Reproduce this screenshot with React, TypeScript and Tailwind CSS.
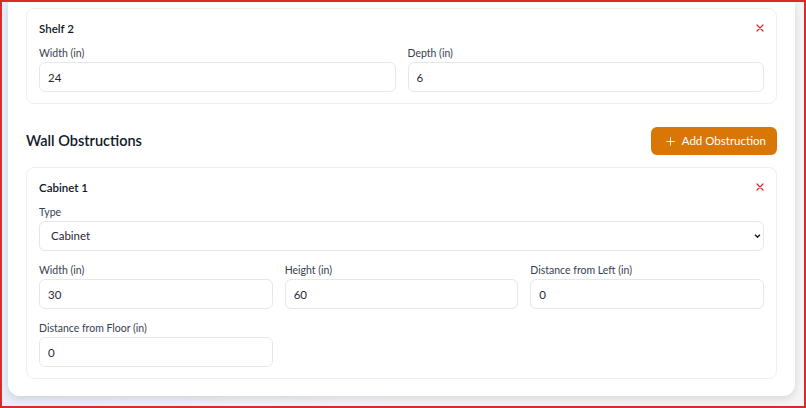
import { Plus } from "lucide-react";

const font = { fontFamily: 'Lato, "Noto Sans", sans-serif' };

function Field({ label, value }: { label: string; value: string }) {
  return (
    <label className="flex flex-col">
      <span className="mb-[1px] text-[10.5px] leading-4 text-[#374151]">{label}</span>
      <input
        readOnly
        value={value}
        className="h-[30px] w-full rounded-md border border-[#e5e7eb] bg-white px-2 text-[11.5px] text-[#1f2937] outline-none"
      />
    </label>
  );
}

function CloseIcon() {
  return (
    <svg viewBox="0 0 8 8" className="h-2 w-2" fill="none" stroke="#dc2626" strokeWidth="1.2" strokeLinecap="round">
      <path d="M1 1l6 6M7 1L1 7" />
    </svg>
  );
}

function ItemCard({ title, children }: { title: string; children: React.ReactNode }) {
  return (
    <section className="rounded-lg border border-[#eeeff1] bg-white px-3 pt-[10px] pb-[11px]">
      <div className="mb-[6px] flex h-5 items-center justify-between">
        <h3 className="text-[11.5px] font-semibold text-[#111827]">{title}</h3>
        <button className="-mt-[2px] -mr-[1px] flex h-4 w-[10px] items-center justify-center">
          <CloseIcon />
        </button>
      </div>
      {children}
    </section>
  );
}

export default function App() {
  return (
    <div
      style={font}
      className="flex h-[408px] w-full flex-col overflow-hidden border-2 border-[#d62c2c] bg-gradient-to-r from-[#e9eff8] via-[#f4f5f7] to-[#f5f5f5] pr-[9px] pl-[6px]"
    >
      <div className="rounded-b-xl bg-white px-[18px] pt-[6px] pb-[17px] shadow-[0_3px_8px_rgba(0,0,0,0.12)]">
        <ItemCard title="Shelf 2">
          <div className="grid grid-cols-2 gap-3">
            <Field label="Width (in)" value="24" />
            <Field label="Depth (in)" value="6" />
          </div>
        </ItemCard>

        <div className="mt-[23px] mb-3 flex items-center justify-between">
          <h2 className="text-[14.5px] font-semibold text-[#111827]">Wall Obstructions</h2>
          <button className="flex h-[28px] items-center gap-[5px] rounded-md bg-[#d97706] pr-[11px] pl-[13px] text-[11.5px] text-white">
            <Plus className="h-[13px] w-[13px]" strokeWidth={1.6} />
            Add Obstruction
          </button>
        </div>

        <ItemCard title="Cabinet 1">
          <div className="grid grid-cols-3 gap-x-3 gap-y-[11px]">
            <label className="col-span-3 flex flex-col">
              <span className="mb-[1px] text-[10.5px] leading-4 text-[#374151]">Type</span>
              <div className="relative">
                <select
                  defaultValue="cabinet"
                  className="h-[30px] w-full appearance-none rounded-md border border-[#e5e7eb] bg-white pl-[11px] text-[11.5px] text-[#1f2937] outline-none"
                >
                  <option value="cabinet">Cabinet</option>
                  <option value="window">Window</option>
                  <option value="door">Door</option>
                </select>
                <svg
                  viewBox="0 0 8 5"
                  className="pointer-events-none absolute top-[13px] right-[3px] h-[4px] w-[7px]"
                  fill="none"
                  stroke="#111"
                  strokeWidth="1.7"
                >
                  <path d="M1 1l3 3 3-3" />
                </svg>
              </div>
            </label>
            <Field label="Width (in)" value="30" />
            <Field label="Height (in)" value="60" />
            <Field label="Distance from Left (in)" value="0" />
            <Field label="Distance from Floor (in)" value="0" />
          </div>
        </ItemCard>
      </div>
    </div>
  );
}
